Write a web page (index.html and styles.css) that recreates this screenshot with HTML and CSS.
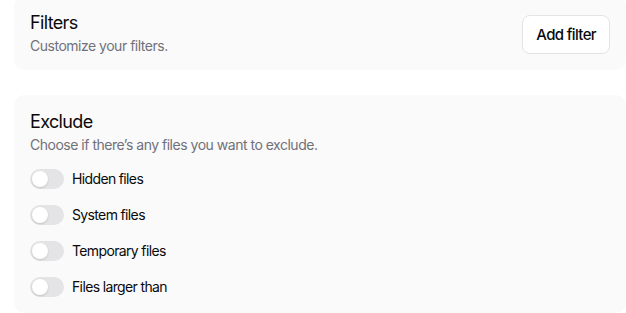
FILE: index.html
```html
<!DOCTYPE html>
<html lang="en">
<head>
  <meta charset="UTF-8" />
  <title>Filters</title>
  <link rel="stylesheet" href="styles.css">
</head>
<body>
  <div class="page">
    <section class="card card-header">
      <div class="card-text">
        <h2>Filters</h2>
        <p class="muted">Customize your filters.</p>
      </div>
      <button class="btn-outline" type="button">Add filter</button>
    </section>

    <section class="card">
      <div class="card-text">
        <h2>Exclude</h2>
        <p class="muted">Choose if there’s any files you want to exclude.</p>
      </div>
      <div class="switch-list">
        <label class="switch-row">
          <span class="switch"><span class="knob"></span></span>
          Hidden files
        </label>
        <label class="switch-row">
          <span class="switch"><span class="knob"></span></span>
          System files
        </label>
        <label class="switch-row">
          <span class="switch"><span class="knob"></span></span>
          Temporary files
        </label>
        <label class="switch-row">
          <span class="switch"><span class="knob"></span></span>
          Files larger than
        </label>
      </div>
    </section>
  </div>
</body>
</html>
```

FILE: styles.css
```css
body {
  margin: 0;
  background: #ffffff;
  color: #09090b;
  font-family: Inter, "Noto Sans", sans-serif;
  letter-spacing: -0.04em;
}

.page {
  display: flex;
  flex-direction: column;
  gap: 25px;
  padding-left: 14px;
  margin-top: -4px;
}

.card {
  background: #fafafa;
  border-radius: 10px;
  padding: 16px;
}

.card-header {
  display: flex;
  align-items: center;
  justify-content: space-between;
  padding-bottom: 14px;
}

.card-text {
  display: flex;
  flex-direction: column;
  gap: 2px;
}

h2 {
  margin: 0;
  font-size: 18px;
  line-height: 22px;
  font-weight: 400;
}

p.muted {
  margin: 0;
  font-size: 14px;
  line-height: 20px;
  color: #71717a;
  letter-spacing: -0.035em;
}

.btn-outline {
  background: #ffffff;
  border: 1px solid #e4e4e7;
  border-radius: 8px;
  padding: 0 13px;
  height: 39px;
  font-family: inherit;
  font-size: 15px;
  font-weight: 500;
  letter-spacing: inherit;
  color: #09090b;
}

.switch-list {
  display: flex;
  flex-direction: column;
  gap: 16px;
  margin-top: 14px;
}

.switch-row {
  display: flex;
  align-items: center;
  gap: 8px;
  font-size: 14px;
  font-weight: 400;
  line-height: 20px;
}

.switch {
  display: flex;
  align-items: center;
  width: 34px;
  height: 20px;
  padding: 0 2px;
  box-sizing: border-box;
  border-radius: 10px;
  background: #e4e4e7;
}

.knob {
  width: 16px;
  height: 16px;
  border-radius: 50%;
  background: #ffffff;
  box-shadow: 0 1px 2px rgba(0, 0, 0, 0.15);
}
```
